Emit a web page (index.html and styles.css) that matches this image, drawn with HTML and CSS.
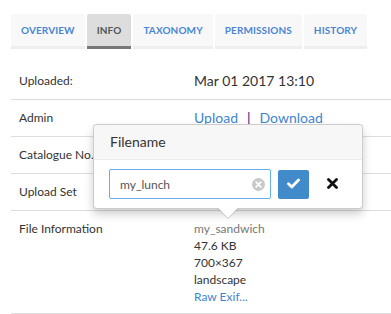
FILE: index.html
```html
<!DOCTYPE html>
<html lang="en">
<head>
  <meta charset="UTF-8" />
  <title>Asset info</title>
  <link rel="stylesheet" href="styles.css">
</head>
<body>
  <div class="page">
    <ul class="tabs">
      <li class="tab">Overview</li>
      <li class="tab active">Info</li>
      <li class="tab">Taxonomy</li>
      <li class="tab">Permissions</li>
      <li class="tab">History</li>
    </ul>

    <div class="info">
      <div class="row">
        <div class="label">Uploaded:</div>
        <div class="value big">Mar 01 2017 13:10</div>
      </div>
      <div class="row">
        <div class="label">Admin</div>
        <div class="value big links">
          <a href="#">Upload</a><span class="sep">|</span><a href="#">Download</a>
        </div>
      </div>
      <div class="row">
        <div class="label">Catalogue No.</div>
        <div class="value"></div>
      </div>
      <div class="row">
        <div class="label">Upload Set</div>
        <div class="value"></div>
      </div>
      <div class="row">
        <div class="label">File Information</div>
        <div class="value lines">
          <span class="muted">my_sandwich</span>
          <span>47.6 KB</span>
          <span>700×367</span>
          <span>landscape</span>
          <a href="#">Raw Exif...</a>
        </div>
      </div>
    </div>

    <div class="popover">
      <div class="popover-title">Filename</div>
      <div class="popover-content">
        <div class="field">
          <input type="text" value="my_lunch">
          <span class="clear">
            <svg width="13" height="13" viewBox="0 0 13 13">
              <circle cx="6.5" cy="6.5" r="6.5" fill="#c9c9c9"/>
              <path d="M4.2 4.2 L8.8 8.8 M8.8 4.2 L4.2 8.8" stroke="#fff" stroke-width="1.8" stroke-linecap="round"/>
            </svg>
          </span>
        </div>
        <button class="ok">
          <svg width="13" height="11" viewBox="0 0 13 11">
            <path d="M1.5 5.8 L4.8 9 L11.5 2" fill="none" stroke="#fff" stroke-width="2.8" stroke-linecap="round" stroke-linejoin="round"/>
          </svg>
        </button>
        <button class="cancel">
          <svg width="11" height="11" viewBox="0 0 11 11">
            <path d="M1.5 1.5 L9.5 9.5 M9.5 1.5 L1.5 9.5" stroke="#111" stroke-width="2.8" stroke-linecap="round"/>
          </svg>
        </button>
      </div>
    </div>
  </div>
</body>
</html>
```

FILE: styles.css
```css
body {
  margin: 0;
  font-family: Lato, "Open Sans", sans-serif;
  color: #333;
  background: #fff;
  overflow: hidden;
}

.page {
  position: relative;
  padding: 14px 0 0 11px;
}

a {
  color: #3f85cf;
  text-decoration: none;
}

/* tabs */
.tabs {
  display: flex;
  gap: 2px;
  margin: 0;
  padding: 0;
  list-style: none;
}

.tab {
  height: 32px;
  line-height: 33px;
  padding: 0 10px;
  background: #f8f8f8;
  border-bottom: 3px solid #eee;
  border-radius: 2px 2px 0 0;
  font-size: 10px;
  font-weight: bold;
  letter-spacing: 0.1px;
  text-transform: uppercase;
  color: #4a86d4;
}

.tab.active {
  background: #ddd;
  border-bottom-color: #777;
  color: #555;
}

/* info table */
.info {
  margin-top: 14px;
}

.row {
  display: flex;
  border-bottom: 1px solid #ddd;
  padding: 8px 0;
  min-height: 20px;
}

.label {
  box-sizing: border-box;
  width: 175px;
  padding-left: 8px;
  font-size: 12px;
  line-height: 20px;
}

.value {
  padding-left: 8px;
  font-size: 12px;
  line-height: 20px;
}

.value.big {
  font-size: 14px;
}

.sep {
  color: #1a237e;
  margin: 0 9px;
}

.lines {
  display: flex;
  flex-direction: column;
  line-height: 17px;
  padding-top: 1px;
}

.muted {
  color: #777;
}

/* editable popover */
.popover {
  position: absolute;
  left: 93px;
  top: 124px;
  width: 268px;
  background: #fff;
  border: 1px solid rgba(0, 0, 0, 0.2);
  border-radius: 4px;
  box-shadow: 0 5px 10px rgba(0, 0, 0, 0.2);
}

.popover::before,
.popover::after {
  content: "";
  position: absolute;
  left: 50%;
  border-style: solid;
  border-color: transparent;
  border-bottom-width: 0;
}

.popover::before {
  bottom: -11px;
  margin-left: -11px;
  border-width: 11px 11px 0;
  border-top-color: rgba(0, 0, 0, 0.2);
}

.popover::after {
  bottom: -10px;
  margin-left: -10px;
  border-width: 10px 10px 0;
  border-top-color: #fff;
}

.popover-title {
  padding: 8px 16px;
  font-size: 14px;
  line-height: 18px;
  background: #f7f7f7;
  border-bottom: 1px solid #ebebeb;
  border-radius: 4px 4px 0 0;
}

.popover-content {
  display: flex;
  align-items: center;
  padding: 9px 15px 9px 15px;
}

.field {
  position: relative;
}

.field input {
  box-sizing: border-box;
  width: 162px;
  height: 30px;
  padding: 0 24px 0 10px;
  border: 1px solid #66afe9;
  border-radius: 2px;
  font-family: Lato, "Open Sans", sans-serif;
  font-size: 12px;
  color: #555;
  outline: none;
}

.clear {
  position: absolute;
  right: 6px;
  top: 9px;
  line-height: 0;
}

button {
  border: none;
  cursor: pointer;
  padding: 0;
}

.ok {
  width: 32px;
  height: 29px;
  margin-left: 7px;
  background: #428bca;
  border-radius: 2px;
}

.cancel {
  width: 30px;
  height: 29px;
  margin-left: 8px;
  background: transparent;
}
```
